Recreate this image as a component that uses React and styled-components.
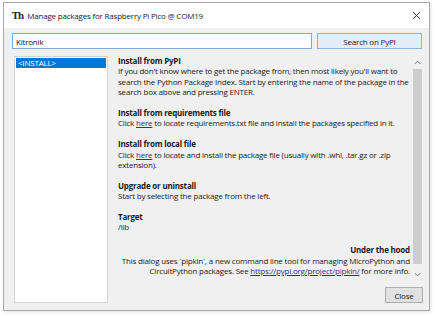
import React from "react";
import styled, { createGlobalStyle } from "styled-components";

const Global = createGlobalStyle`
  html, body { margin: 0; padding: 0; background: #ffffff; }
  body {
    font-family: "Open Sans", "Noto Sans", sans-serif;
    letter-spacing: -0.2px;
  }
`;

const Page = styled.div`
  width: 437px;
  height: 316px;
  padding: 2px 0 0 3px;
  box-sizing: border-box;
`;

const Window = styled.div`
  width: 427px;
  height: 309px;
  box-sizing: border-box;
  border: 1px solid #a9a9a9;
  box-shadow: 1px 1px 3px rgba(0, 0, 0, 0.12);
  display: flex;
  flex-direction: column;
  background: #f0f0f0;
`;

const TitleBar = styled.div`
  height: 25px;
  flex: none;
  background: #ffffff;
  display: flex;
  align-items: center;
  padding: 0 6px 0 8px;
  gap: 4px;
  font-size: 8px;
  color: #1a1a1a;
`;

const Logo = styled.span`
  font-family: "DejaVu Serif", serif;
  font-weight: bold;
  font-size: 9px;
  letter-spacing: -1px;
  color: #2b2b2b;
`;

const TitleText = styled.span`
  flex: 1;
`;

const CloseX = styled.svg`
  width: 9px;
  height: 9px;
  margin-right: 2px;
`;

const Body = styled.div`
  flex: 1;
  display: flex;
  flex-direction: column;
  padding: 5px 6px 7px 8px;
  min-height: 0;
`;

const SearchRow = styled.div`
  display: flex;
  gap: 5px;
  height: 16px;
`;

const SearchInput = styled.div`
  width: 300px;
  box-sizing: border-box;
  border: 1px solid #7fa7cf;
  background: #ffffff;
  font-size: 8px;
  color: #111;
  display: flex;
  align-items: center;
  padding-left: 3px;
`;

const Button = styled.div`
  box-sizing: border-box;
  border: 1px solid ${(p) => (p.$accent ? "#8cb6e0" : "#adadad")};
  background: ${(p) => (p.$accent ? "#e3eef9" : "#e1e1e1")};
  font-size: 8px;
  color: #1a1a1a;
  display: flex;
  align-items: center;
  justify-content: center;
  width: ${(p) => p.$w}px;
  height: 16px;
`;

const Main = styled.div`
  flex: 1;
  display: flex;
  margin-top: 7px;
  padding-left: 2px;
  gap: 4px;
  min-height: 0;
`;

const ListBox = styled.div`
  width: 94px;
  box-sizing: border-box;
  border: 1px solid #d4d4d4;
  background: #ffffff;
  padding: 1px;
`;

const ListItem = styled.div`
  height: 10px;
  line-height: 10px;
  font-size: 8px;
  padding-left: 2px;
  background: ${(p) => (p.$selected ? "#0078d7" : "transparent")};
  color: ${(p) => (p.$selected ? "#ffffff" : "#111")};
`;

const RightCol = styled.div`
  flex: 1;
  display: flex;
  flex-direction: column;
  min-width: 0;
`;

const TextArea = styled.div`
  flex: 1;
  display: flex;
  min-height: 0;
`;

const Doc = styled.div`
  flex: 1;
  padding: 0 2px 0 6px;
  font-size: 8px;
  line-height: 10.4px;
  color: #1a1a1a;
  white-space: nowrap;
`;

const Section = styled.div`
  margin-bottom: ${(p) => (p.$gap ?? 1) * 10.4}px;
  text-align: ${(p) => (p.$right ? "right" : "left")};
`;

const Heading = styled.div`
  font-weight: 700;
`;

const Link = styled.span`
  color: #2e2e9e;
  text-decoration: underline;
`;

const ScrollBar = styled.div`
  width: 11px;
  flex: none;
  display: flex;
  flex-direction: column;
  align-items: center;
  padding-top: 2px;
`;

const Arrow = styled.svg`
  width: 7px;
  height: 5px;
  flex: none;
  margin: 2px 0;
`;

const Thumb = styled.div`
  width: 9px;
  height: 195px;
  background: #cdcdcd;
  margin: 2px 0 6px;
`;

const Footer = styled.div`
  height: 21px;
  flex: none;
  display: flex;
  justify-content: flex-end;
  align-items: flex-end;
`;

export default function App() {
  return (
    <Page>
      <Global />
      <Window>
        <TitleBar>
          <Logo>Th</Logo>
          <TitleText>Manage packages for Raspberry Pi Pico @ COM19</TitleText>
          <CloseX viewBox="0 0 10 10">
            <path d="M1 1 L9 9 M9 1 L1 9" stroke="#333" strokeWidth="1" />
          </CloseX>
        </TitleBar>
        <Body>
          <SearchRow>
            <SearchInput>Kitronik</SearchInput>
            <Button $accent $w={105}>Search on PyPI</Button>
          </SearchRow>
          <Main>
            <ListBox>
              <ListItem $selected>&lt;INSTALL&gt;</ListItem>
            </ListBox>
            <RightCol>
              <TextArea>
                <Doc>
                  <Section>
                    <Heading>Install from PyPI</Heading>
                    If you don't know where to get the package from, then most likely you'll want to
                    <br />
                    search the Python Package Index. Start by entering the name of the package in the
                    <br />
                    search box above and pressing ENTER.
                  </Section>
                  <Section>
                    <Heading>Install from requirements file</Heading>
                    Click <Link>here</Link> to locate requirements.txt file and install the packages specified in it.
                  </Section>
                  <Section>
                    <Heading>Install from local file</Heading>
                    Click <Link>here</Link> to locate and install the package file (usually with .whl, .tar.gz or .zip
                    <br />
                    extension).
                  </Section>
                  <Section>
                    <Heading>Upgrade or uninstall</Heading>
                    Start by selecting the package from the left.
                  </Section>
                  <Section $gap={1.2}>
                    <Heading>Target</Heading>
                    /lib
                  </Section>
                  <Section $right $gap={0}>
                    <Heading>Under the hood</Heading>
                    This dialog uses `pipkin`, a new command line tool for managing MicroPython and
                    <br />
                    CircuitPython packages. See <Link>https://pypi.org/project/pipkin/</Link> for more info.
                  </Section>
                </Doc>
                <ScrollBar>
                  <Arrow viewBox="0 0 8 5">
                    <path d="M1 4 L4 1 L7 4" fill="none" stroke="#606060" strokeWidth="1" />
                  </Arrow>
                  <Thumb />
                  <Arrow viewBox="0 0 8 5">
                    <path d="M1 1 L4 4 L7 1" fill="none" stroke="#606060" strokeWidth="1" />
                  </Arrow>
                </ScrollBar>
              </TextArea>
              <Footer>
                <Button $w={38}>Close</Button>
              </Footer>
            </RightCol>
          </Main>
        </Body>
      </Window>
    </Page>
  );
}
